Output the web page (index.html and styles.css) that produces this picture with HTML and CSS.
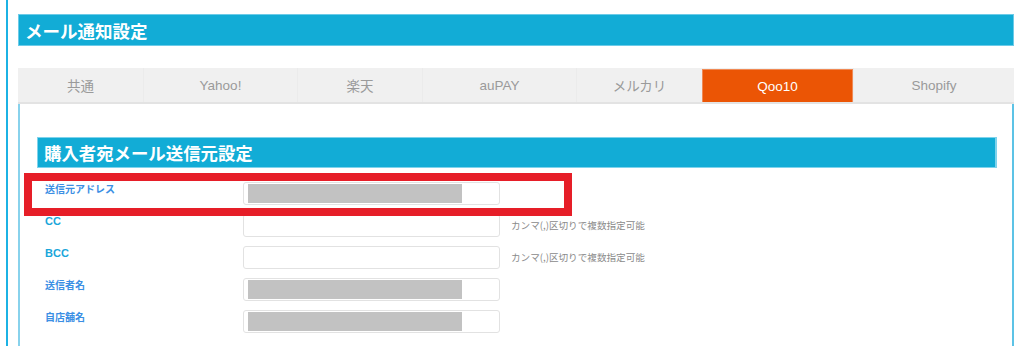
FILE: index.html
```html
<!DOCTYPE html>
<html lang="ja">
<head>
    <meta charset="UTF-8">
    <meta name="viewport" content="width=device-width, initial-scale=1.0">
    <title>メール通知設定</title>
    <link rel="stylesheet" href="styles.css">
</head>
<body>
    <div id="page">
        <h1 class="page-title">メール通知設定</h1>

        <!-- Mall tabs -->
        <nav class="tabs">
            <div class="tab">共通</div>
            <div class="tab">Yahoo!</div>
            <div class="tab">楽天</div>
            <div class="tab">auPAY</div>
            <div class="tab">メルカリ</div>
            <div class="tab active">Qoo10</div>
            <div class="tab">Shopify</div>
        </nav>

        <section class="panel">
            <h2 class="section-title">購入者宛メール送信元設定</h2>

            <div class="form">
                <div class="highlight"></div>

                <div class="row">
                    <label class="label">送信元アドレス</label>
                    <div class="field"><span class="masked"></span></div>
                </div>
                <div class="row">
                    <label class="label latin">CC</label>
                    <div class="field"></div>
                    <span class="hint">カンマ(,)区切りで複数指定可能</span>
                </div>
                <div class="row">
                    <label class="label latin">BCC</label>
                    <div class="field"></div>
                    <span class="hint">カンマ(,)区切りで複数指定可能</span>
                </div>
                <div class="row">
                    <label class="label">送信者名</label>
                    <div class="field"><span class="masked"></span></div>
                </div>
                <div class="row">
                    <label class="label">自店舗名</label>
                    <div class="field"><span class="masked"></span></div>
                </div>
            </div>
        </section>
    </div>
</body>
</html>
```

FILE: styles.css
```css
body {
    margin: 0;
    padding: 0;
    background-color: white;
    font-family: "Liberation Sans", "Noto Sans CJK JP", sans-serif;
    color: #333;
    overflow: hidden;
}

#page {
    margin-left: 6px;
    border-left: 2px solid #1cb2e4;
    padding: 14px 10px 0 10px;
    min-height: 346px;
    box-sizing: border-box;
}

.page-title {
    margin: 0;
    height: 32px;
    line-height: 31px;
    padding-left: 6px;
    background-color: #12acd6;
    border: 1px solid #6ccbe8;
    box-sizing: border-box;
    color: white;
    font-family: "Noto Sans CJK JP", sans-serif;
    font-size: 17.5px;
    font-weight: bold;
}

.tabs {
    display: grid;
    grid-template-columns: 125fr 154fr 125fr 154fr 126fr 151fr 161fr;
    margin-top: 22px;
    height: 36px;
    background-color: #f0f0f0;
    border-bottom: 2px solid #e3e3e3;
    box-sizing: border-box;
}

.tab {
    display: flex;
    align-items: center;
    justify-content: center;
    border-left: 1px solid #ebebeb;
    color: #9a9a9a;
    font-size: 13.5px;
}

.tab:first-child {
    border-left: none;
}

.tab.active {
    background-color: #eb5505;
    border: 1px solid #f08a55;
    border-bottom: none;
    margin-top: 1px;
    color: white;
}

.panel {
    border-left: 2px solid #88d2ec;
    border-right: 2px solid #5cc3e6;
    padding: 33px 15px 20px 17px;
}

.section-title {
    margin: 0;
    height: 31px;
    line-height: 30px;
    padding-left: 6px;
    background-color: #12acd6;
    border: 1px solid #7fd3ec;
    border-right-width: 2px;
    box-sizing: border-box;
    color: white;
    font-family: "Noto Sans CJK JP", sans-serif;
    font-size: 17.4px;
    font-weight: bold;
}

.form {
    position: relative;
    margin-top: 10px;
}

/* red annotation frame drawn over the first row */
.highlight {
    position: absolute;
    top: -5px;
    left: -13px;
    width: 548px;
    height: 43px;
    border: 8px solid #e61e28;
    box-sizing: border-box;
    pointer-events: none;
}

.row {
    display: flex;
    align-items: flex-start;
    height: 32px;
    padding-left: 8px;
}

.label {
    width: 198px;
    padding-top: 4px;
    line-height: 14px;
    font-family: "Noto Sans CJK JP", sans-serif;
    font-size: 10px;
    font-weight: bold;
    color: #3b8fe4;
}

.label.latin {
    font-family: "Liberation Sans", sans-serif;
    font-size: 11px;
    color: #1aa6da;
}

.field {
    margin-top: 4px;
    width: 257px;
    height: 23px;
    border: 1px solid #e2e2e2;
    border-radius: 3px;
    background-color: white;
    box-sizing: border-box;
    padding: 1px 0 1px 4px;
}

.masked {
    display: block;
    width: 214px;
    height: 19px;
    background-color: #c2c2c2;
}

.hint {
    margin-left: 11px;
    margin-top: 4px;
    line-height: 23px;
    font-family: "Noto Sans CJK JP", sans-serif;
    font-size: 9.6px;
    color: #8a8a8a;
}
```
